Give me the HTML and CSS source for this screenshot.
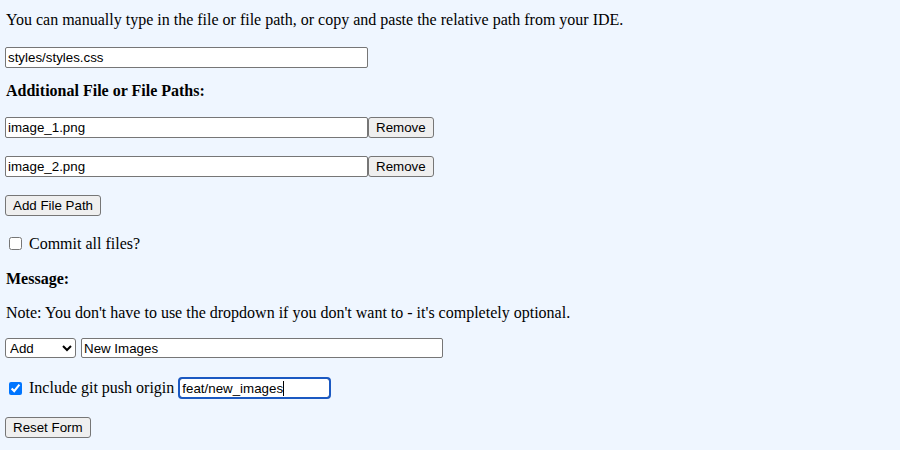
FILE: index.html
```html
<!DOCTYPE html>
<html>
<head>
<meta charset="utf-8">
<link rel="stylesheet" href="styles.css">
</head>
<body>
<form class="form">
  <p class="text intro">You can manually type in the file or file path, or copy and paste the relative path from your IDE.</p>
  <div class="row gap-file"><input class="field wide" type="text" value="styles/styles.css"></div>
  <p class="text heading">Additional File or File Paths:</p>
  <div class="row first-path"><input class="field wide" type="text" value="image_1.png"><button class="btn" type="button">Remove</button></div>
  <div class="row gap-18"><input class="field wide" type="text" value="image_2.png"><button class="btn" type="button">Remove</button></div>
  <div class="row gap-18"><button class="btn" type="button">Add File Path</button></div>
  <label class="row check-row gap-18 text"><input class="check" type="checkbox"><span>Commit all files?</span></label>
  <p class="text heading gap-18">Message:</p>
  <p class="text note">Note: You don't have to use the dropdown if you don't want to - it's completely optional.</p>
  <div class="row msg-row">
    <select class="select"><option>Add</option><option>Update</option><option>Remove</option></select>
    <input class="field msg" type="text" value="New Images">
  </div>
  <div class="row check-row push-row text">
    <input class="check" type="checkbox" checked>
    <span class="push-label">Include git push origin</span>
    <span class="caret-wrap"><input class="field branch focused" type="text" value="feat/new_images"><span class="caret"></span></span>
  </div>
  <div class="row push-gap"><button class="btn" type="reset">Reset Form</button></div>
</form>
</body>
</html>
```

FILE: styles.css
```css
html, body {
  margin: 0;
  padding: 0;
  background: #eff6ff;
}
body {
  font-family: "Liberation Serif", "Times New Roman", serif;
  font-size: 16px;
  color: #000;
}
.form {
  display: flex;
  flex-direction: column;
  align-items: flex-start;
  padding: 0 5px;
}
.text {
  margin: 0;
  line-height: 18px;
  font-size: 16px;
}
.intro {
  margin-top: 11px;
  padding-left: 1px;
}
.heading {
  font-weight: bold;
  margin-top: 14px;
  padding-left: 1px;
}
.note {
  margin-top: 16px;
  padding-left: 1px;
}
.row {
  display: flex;
  align-items: center;
}
.gap-file { margin-top: 18px; }
.first-path { margin-top: 17px; }
.gap-18 { margin-top: 18px; }
.heading.gap-18 { margin-top: 17px; }
.msg-row { margin-top: 16px; gap: 5px; }
.push-row { margin-top: 20px; }
.push-gap { margin-top: 19px; }

.field {
  font-family: "Liberation Sans", Arial, sans-serif;
  font-size: 13.33px;
  height: 21px;
  box-sizing: border-box;
  margin: 0;
  padding: 1px 2px;
  border: 1px solid #767676;
  border-radius: 2px;
  background: #fff;
  color: #000;
}
.wide { width: 363px; }
.msg { width: 362px; height: 20px; }
.branch { width: 151px; height: 20px; }
.focused {
  outline: 2px solid #1b59c2;
  outline-offset: -1px;
  border-radius: 3px;
}
.caret-wrap {
  position: relative;
  display: inline-flex;
}
.caret {
  position: absolute;
  left: 104px;
  top: 3px;
  width: 1px;
  height: 15px;
  background: #000;
}
.btn {
  font-family: "Liberation Sans", Arial, sans-serif;
  font-size: 13.33px;
  height: 21px;
  box-sizing: border-box;
  margin: 0;
  padding: 1px 7px;
  border: 1px solid #767676;
  border-radius: 3px;
  background: #efefef;
  color: #000;
}
.select {
  font-family: "Liberation Sans", Arial, sans-serif;
  font-size: 13.33px;
  width: 71px;
  height: 20px;
  box-sizing: border-box;
  margin: 0;
  border: 1px solid #767676;
  border-radius: 3px;
  background: #fff;
  color: #000;
}
.check {
  width: 13px;
  height: 13px;
  margin: 3px 3px 3px 4px;
  accent-color: #0075ff;
}
.check-row span {
  margin-left: 4px;
}
.check-row .caret-wrap { margin-left: 5px; }
.check-row .caret { margin-left: 0; }
```
